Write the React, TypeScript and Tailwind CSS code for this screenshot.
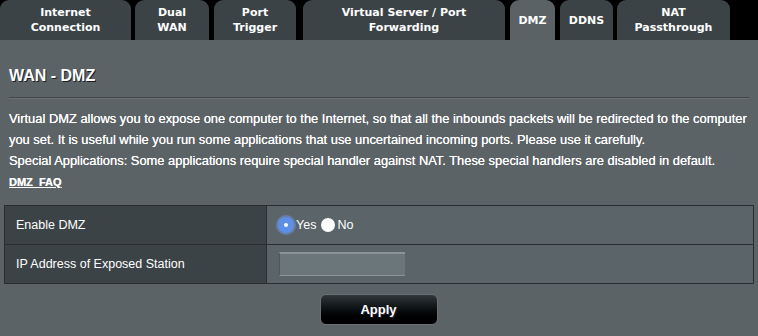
import React from 'react';

const tabs = [
    { label: ['Internet', 'Connection'], w: 'w-[131px]', ml: 'ml-0' },
    { label: ['Dual', 'WAN'], w: 'w-[74px]', ml: 'ml-[4px]' },
    { label: ['Port', 'Trigger'], w: 'w-[82px]', ml: 'ml-[5px]' },
    { label: ['Virtual Server / Port', 'Forwarding'], w: 'w-[202px]', ml: 'ml-[7px]' },
    { label: ['DMZ'], w: 'w-[45px]', ml: 'ml-[5px]', active: true },
    { label: ['DDNS'], w: 'w-[53px]', ml: 'ml-[5px]' },
    { label: ['NAT', 'Passthrough'], w: 'w-[113px]', ml: 'ml-[4px]' },
];

const App = () => {
    return (
        <main className="w-[758px] h-[336px] bg-[#5c6367] overflow-hidden font-['Liberation_Sans',Arial,sans-serif] text-white">
            {/* tab bar */}
            <nav className="flex h-[40px] bg-black">
                {tabs.map((t) => (
                    <div
                        key={t.label.join(' ')}
                        className={`${t.w} ${t.ml} h-[40px] rounded-t-[9px] flex flex-col items-center justify-center font-['DejaVu_Sans',Verdana,sans-serif] font-bold text-[11px] leading-[15px] text-white ${t.active ? 'bg-[#5b6266]' : 'bg-[#3c4347]'}`}
                    >
                        {t.label.map((l) => (
                            <span key={l}>{l}</span>
                        ))}
                    </div>
                ))}
            </nav>

            <section className="pl-[9px] pr-[4px]">
                <h3 className="pt-[26px] text-[16px] leading-[20px] font-bold [text-shadow:1px_1px_0_#1b1e20]">WAN - DMZ</h3>
                <div className="mt-[11px] mr-[5px] h-[2px] bg-[#41474b] border-b border-[#6a7074]" />

                <div className="mt-[9px] text-[12.9px] leading-[21px] text-white [text-shadow:0_0_0.6px_#ffffff]">
                    <p>
                        Virtual DMZ allows you to expose one computer to the Internet, so that all the inbounds packets will be redirected to the computer<br />
                        you set. It is useful while you run some applications that use uncertained incoming ports. Please use it carefully.
                    </p>
                    <p>Special Applications: Some applications require special handler against NAT. These special handlers are disabled in default.</p>
                    <a className="text-[11px] font-bold underline">DMZ_FAQ</a>
                </div>
            </section>

            {/* settings table */}
            <div className="mx-[4px] mt-[12px] border border-[#2a2e30] text-[12.5px]">
                <div className="flex h-[39px] border-b border-[#2a2e30]">
                    <div className="w-[262px] bg-[#3c4347] border-r border-[#2a2e30] flex items-center pl-[11px]">Enable DMZ</div>
                    <div className="flex-1 bg-[#5a6469] flex items-center pl-[11px] gap-[2px]">
                        <span className="w-[16px] h-[16px] rounded-full bg-[#5d8fe6] shadow-[0_0_0_2px_rgba(120,160,240,0.45)] flex items-center justify-center">
                            <span className="w-[4px] h-[4px] rounded-full bg-white" />
                        </span>
                        <span>Yes</span>
                        <span className="ml-[3px] w-[14px] h-[14px] rounded-full bg-white" />
                        <span>No</span>
                    </div>
                </div>
                <div className="flex h-[38px]">
                    <div className="w-[262px] bg-[#3c4347] border-r border-[#2a2e30] flex items-center pl-[11px]">IP Address of Exposed Station</div>
                    <div className="flex-1 bg-[#5a6469] flex items-center pl-[12px]">
                        <div className="w-[126px] h-[24px] bg-[#6b767a] border-t-2 border-[#8a9397] border-b border-b-[#8a9397] border-l border-l-[#4e575b]" />
                    </div>
                </div>
            </div>

            <div className="flex justify-center mt-[10px]">
                <button className="ml-[-1px] w-[118px] h-[31px] rounded-[6px] border border-[#6a7073] bg-gradient-to-b from-[#2f383c] to-[#000000] text-white font-bold text-[13px] [text-shadow:1px_1px_0_#223]">
                    Apply
                </button>
            </div>
        </main>
    );
};

export default App;
